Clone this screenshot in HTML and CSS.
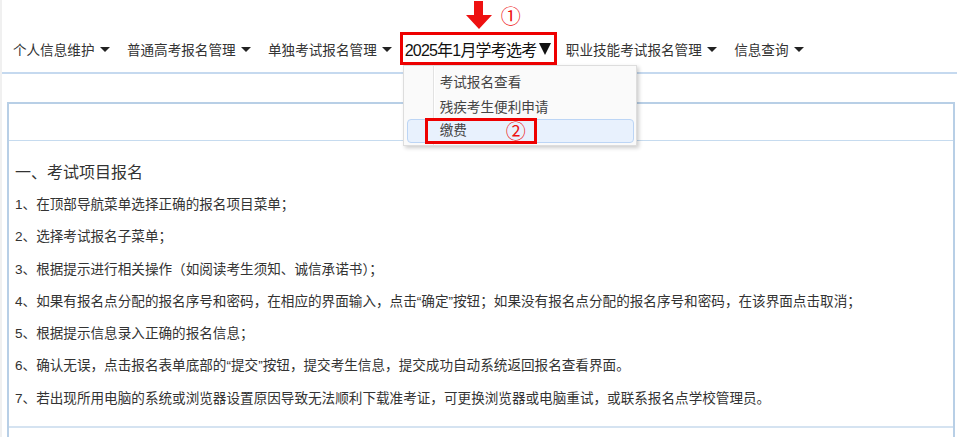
FILE: index.html
```html
<!DOCTYPE html>
<html lang="zh-CN">
<head>
<meta charset="utf-8">
<title>考试报名</title>
<link rel="stylesheet" href="styles.css">
</head>
<body>
<div class="page">
  <nav class="topnav">
    <ul class="menu">
      <li class="menu-item"><span>个人信息维护</span><i class="caret"></i></li>
      <li class="menu-item"><span>普通高考报名管理</span><i class="caret"></i></li>
      <li class="menu-item"><span>单独考试报名管理</span><i class="caret"></i></li>
      <li class="menu-item active">
        <svg class="pointer" width="26" height="28" viewBox="0 0 26 28" aria-hidden="true">
          <path d="M8 0 H17 V14 H26 L13 28 L0 14 H8 Z" fill="#ee1111"/>
        </svg>
        <span class="num num1">①</span>
        <span class="active-label">2025年1月学考选考</span><i class="caret-big"></i>
        <ul class="dropdown">
          <li class="drop-item">考试报名查看</li>
          <li class="drop-item">残疾考生便利申请</li>
          <li class="drop-item hover">缴费<span class="mark"></span><span class="num num2">②</span></li>
        </ul>
      </li>
      <li class="menu-item"><span>职业技能考试报名管理</span><i class="caret"></i></li>
      <li class="menu-item"><span>信息查询</span><i class="caret"></i></li>
    </ul>
  </nav>

  <section class="panel">
    <div class="panel-head"></div>
    <div class="panel-body">
      <h3 class="title">一、考试项目报名</h3>
      <p class="step">1、在顶部导航菜单选择正确的报名项目菜单；</p>
      <p class="step">2、选择考试报名子菜单；</p>
      <p class="step">3、根据提示进行相关操作（如阅读考生须知、诚信承诺书）；</p>
      <p class="step">4、如果有报名点分配的报名序号和密码，在相应的界面输入，点击“确定”按钮；如果没有报名点分配的报名序号和密码，在该界面点击取消；</p>
      <p class="step">5、根据提示信息录入正确的报名信息；</p>
      <p class="step">6、确认无误，点击报名表单底部的“提交”按钮，提交考生信息，提交成功自动系统返回报名查看界面。</p>
      <p class="step">7、若出现所用电脑的系统或浏览器设置原因导致无法顺利下载准考证，可更换浏览器或电脑重试，或联系报名点学校管理员。</p>
    </div>
    <div class="panel-foot"></div>
  </section>
</div>
</body>
</html>
```

FILE: styles.css
```css
* {
  box-sizing: border-box;
}

html, body {
  margin: 0;
  padding: 0;
  background: #ffffff;
}

body {
  font-family: "Liberation Sans", "Noto Sans CJK SC", sans-serif;
  font-size: 13.6px;
  color: #333333;
}

.page {
  border-left: 2px solid #f0f0f0;
  min-height: 437px;
  overflow: hidden;
}

/* ---------- top navigation ---------- */
.topnav {
  padding-top: 32px;
  padding-bottom: 7px;
  border-bottom: 2px solid #c5d9ef;
}

.menu {
  list-style: none;
  margin: 0;
  padding: 0 0 0 2.5px;
  display: flex;
  align-items: center;
  height: 33px;
}

.menu-item {
  display: flex;
  align-items: center;
  gap: 5.5px;
  padding: 0 8.45px;
  height: 33px;
  color: #333333;
  white-space: nowrap;
}

.caret {
  display: block;
  width: 0;
  height: 0;
  border-left: 5px solid transparent;
  border-right: 5px solid transparent;
  border-top: 5px solid #222222;
  margin-top: 1px;
}

.menu-item.active {
  position: relative;
  gap: 3px;
  padding: 0 3px 0 2px;
  margin-left: -1px;
  border: 3px solid #ee0000;
  z-index: 5;
}

.active-label {
  font-family: "Liberation Sans Narrow", "Liberation Sans", "Noto Sans CJK SC", sans-serif;
  font-size: 16px;
  letter-spacing: -0.8px;
  color: #111111;
}

.caret-big {
  display: block;
  width: 0;
  height: 0;
  border-left: 6.5px solid transparent;
  border-right: 6.5px solid transparent;
  border-top: 12px solid #111111;
}

.pointer {
  position: absolute;
  left: 63px;
  top: -34px;
}

.num {
  position: absolute;
  font-family: "Noto Sans CJK SC", sans-serif;
  color: #ee1111;
  font-size: 20px;
  line-height: 20px;
}

.num1 {
  left: 98px;
  top: -29px;
}

/* ---------- dropdown ---------- */
.dropdown {
  position: absolute;
  left: 0;
  top: calc(100% + 3px);
  width: 234px;
  margin: 0;
  padding: 3px 2px 2px 3px;
  list-style: none;
  background-color: #fafafa;
  background-image: linear-gradient(to right, transparent 29px, #e2e2e2 29px, #e2e2e2 30px, #ffffff 30px, #ffffff 31px, transparent 31px);
  border: 1px solid #dddddd;
  box-shadow: 2px 2px 4px rgba(0, 0, 0, 0.2);
  z-index: 10;
}

.drop-item {
  position: relative;
  height: 25px;
  line-height: 25px;
  padding-left: 32px;
  color: #444444;
  font-size: 13.6px;
  border: 1px solid transparent;
  border-radius: 4px;
}

.drop-item.hover {
  background: #e8f1fd;
  border-color: #bcd5f5;
  height: 24px;
  line-height: 22px;
}

.mark {
  position: absolute;
  left: 17px;
  top: -2px;
  width: 112px;
  height: 26px;
  border: 3px solid #ee0000;
}

.num2 {
  left: 98px;
  top: 1px;
}

/* ---------- content panel ---------- */
.panel {
  margin: 28px 2px 0 5px;
  border: 2px solid #b8cfe6;
  border-bottom: none;
}

.panel-head {
  height: 37px;
  border-bottom: 1px solid #c6dbef;
}

.panel-body {
  padding: 16px 6px 11px;
}

.title {
  margin: 0;
  font-size: 16px;
  font-weight: normal;
  line-height: 32px;
  color: #333333;
}

.step {
  margin: 0;
  height: 32.3px;
  line-height: 32.3px;
  white-space: nowrap;
  color: #333333;
}

.panel-foot {
  height: 20px;
  border-top: 2px solid #d5e3f1;
}
```
